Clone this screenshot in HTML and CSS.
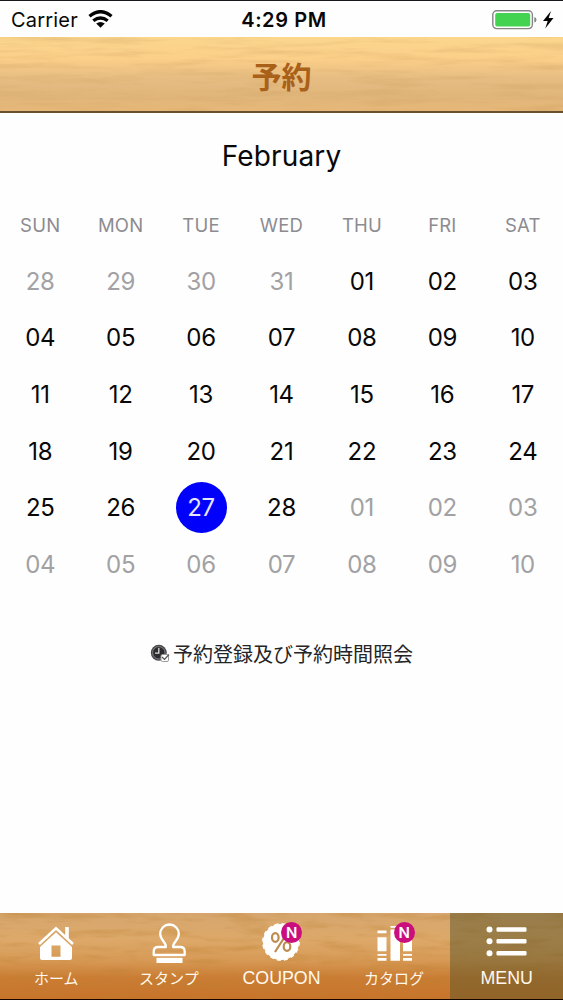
FILE: index.html
```html
<!DOCTYPE html>
<html lang="ja">
<head>
<meta charset="utf-8">
<title>予約</title>
<link rel="stylesheet" href="styles.css">
</head>
<body>
<div class="screen">
  <div class="status">
    <div class="carrier"><span>Carrier</span>
      <svg width="25" height="18" viewBox="0 0 25 18" fill="none" stroke="#050505" stroke-width="3.4"><path d="M1.5 6.2Q12.5-2.8 23.5 6.2M5.3 10.8Q12.5 5 19.7 10.8"/><path d="M12.500 17.800L8.200 13.500Q12.500 10.300 16.800 13.500Z" fill="#050505" stroke="none"/></svg>
    </div>
    <div class="time">4:29 PM</div>
    <div class="power">
      <svg width="63" height="20" viewBox="0 0 63 20"><rect x=".8" y=".8" width="39.600" height="17.800" rx="4" fill="#fff" stroke="#858585" stroke-width="1.400"/><rect x="3.200" y="3" width="35" height="13.400" rx="2" fill="#43d351"/><path d="M42.300 7q2.200.4 2.200 2.800t-2.200 2.800z" fill="#858585"/><path d="M59 1L51 11h4.700L53.200 18.600 61.500 8h-4.800z" fill="#050505"/></svg>
    </div>
  </div>
  <header class="header">
    <svg class="grain" width="563" height="74"><filter id="g1" x="0" y="0" width="100%" height="100%"><feTurbulence type="fractalNoise" baseFrequency=".014 .15" numOctaves="4" seed="8"/><feColorMatrix values="0 0 0 0 .6  0 0 0 0 .35  0 0 0 0 .12  1.600 0 0 0 -.72"/></filter><rect width="563" height="74" filter="url(#g1)"/></svg>
    <h1 class="title">予約</h1>
  </header>
  <main class="main">
    <h2 class="month">February</h2>
    <div class="weekdays"><span>SUN</span><span>MON</span><span>TUE</span><span>WED</span><span>THU</span><span>FRI</span><span>SAT</span></div>
    <div class="days">
      <span class="out">28</span><span class="out">29</span><span class="out">30</span><span class="out">31</span><span>01</span><span>02</span><span>03</span>
      <span>04</span><span>05</span><span>06</span><span>07</span><span>08</span><span>09</span><span>10</span>
      <span>11</span><span>12</span><span>13</span><span>14</span><span>15</span><span>16</span><span>17</span>
      <span>18</span><span>19</span><span>20</span><span>21</span><span>22</span><span>23</span><span>24</span>
      <span>25</span><span>26</span><span><b class="selected">27</b></span><span>28</span><span class="out">01</span><span class="out">02</span><span class="out">03</span>
      <span class="out">04</span><span class="out">05</span><span class="out">06</span><span class="out">07</span><span class="out">08</span><span class="out">09</span><span class="out">10</span>
    </div>
    <div class="action">
      <svg width="20" height="19" viewBox="0 0 20 19"><circle cx="8.800" cy="8.800" r="8" fill="#48484c"/><circle cx="8.800" cy="8.800" r="6.200" fill="#2c2c30" stroke="#929295" stroke-width=".8"/><path d="M8.800 4v5.200H5" fill="none" stroke="#ddd" stroke-width="1.300"/><rect x="11" y="10.500" width="7.500" height="7" rx="1.500" fill="#fff" stroke="#9a9a9d"/><path d="M12 13l2.500 2.500L19 10.500" fill="none" stroke="#555" stroke-width="1.200"/></svg>
      <span>予約登録及び予約時間照会</span>
    </div>
  </main>
  <nav class="tabs">
    <svg class="grain" width="563" height="86"><filter id="g2" x="0" y="0" width="100%" height="100%"><feTurbulence type="fractalNoise" baseFrequency=".022 .12" numOctaves="4" seed="5"/><feColorMatrix values="0 0 0 0 .5  0 0 0 0 .22  0 0 0 0 .03  1.900 0 0 0 -.9"/></filter><rect width="563" height="86" filter="url(#g2)"/></svg>
    <div class="tab">
      <svg width="40" height="42" viewBox="0 0 40 42"><path d="M3 23L20 7.200 37 23" fill="none" stroke="#fff" stroke-width="2.600"/><path d="M29.200 6h3.600v13l-3.600-3.400z" fill="#fff"/><path fill="#fff" fill-rule="evenodd" d="M20 11.300L36 26v11q0 2-2 2H6q-2 0-2-2V26zM15.500 24.500v11.200h9V24.500z"/></svg>
      <span class="jp">ホーム</span>
    </div>
    <div class="tab">
      <svg width="40" height="46" viewBox="0 0 40 46"><path d="M16.800 26c1-4.500-5.600-6.500-5.600-13.200a9.300 9.300 0 0 1 18.600 0c0 6.700-6.600 8.700-5.600 13.200h7c3.200 0 4.500 2 4.500 4.500V34h-31v-3.500c0-2.500 1.300-4.500 4.500-4.500z" fill="none" stroke="#fff" stroke-width="2.300" stroke-linejoin="round"/><path d="M7.500 36.800h26V42h-26z" fill="#fff"/></svg>
      <span class="jp">スタンプ</span>
    </div>
    <div class="tab">
      <svg width="44" height="42" viewBox="0 0 44 42"><circle cx="22" cy="21" r="18" fill="#fff"/><circle cx="22" cy="21" r="18.200" fill="none" stroke="#fff" stroke-width="1.400" stroke-dasharray="4 3.150"/><g fill="none" stroke="#bd8a4f" stroke-width="2.200"><ellipse cx="16.300" cy="16.500" rx="3.300" ry="4.300"/><ellipse cx="28" cy="25.500" rx="3.300" ry="4.300"/><path d="M28.500 11.500L16 31"/></g></svg>
      <b class="badge">N</b>
      <span class="en">COUPON</span>
    </div>
    <div class="tab">
      <svg width="40" height="42" viewBox="0 0 40 42" fill="#fff"><path d="M3.500 9.500h9v2.800h-9zM3.500 16.200h9v14h-9zM3.500 33h9v1.800h-9zM3.500 37h9v2.700h-9zM16.500 5h9.500v1.800h-9.500zM16.500 8.600h9.500v31.100h-9.500zM29 16h9v14.200h-9zM29 33h9v1.800h-9zM29 37h9v2.700h-9z"/></svg>
      <b class="badge">N</b>
      <span class="jp">カタログ</span>
    </div>
    <div class="tab active">
      <svg width="42" height="42" viewBox="1 0 42 42" fill="#fff"><circle cx="4.500" cy="8.500" r="3"/><circle cx="4.500" cy="20.300" r="3"/><circle cx="4.500" cy="32.200" r="3"/><rect x="11.500" y="6.300" width="30" height="4.400" rx="1.200"/><rect x="11.500" y="18.100" width="30" height="4.400" rx="1.200"/><rect x="11.500" y="30" width="30" height="4.400" rx="1.200"/></svg>
      <span class="en">MENU</span>
    </div>
  </nav>
</div>
</body>
</html>
```
FILE: styles.css
```css
* { box-sizing: border-box; }
body { margin: 0; background: #fefefe; font-family: Inter, "Noto Sans CJK JP", sans-serif; color: #080808; }
.screen { width: 563px; height: 1000px; display: flex; flex-direction: column; overflow: hidden; border-top: 1px solid #19171b; border-bottom: 1px solid #160400; }
.status { height: 36px; flex: none; display: grid; grid-template-columns: 1fr auto 1fr; align-items: center; padding: 1px 8px 0 11px; background: #fefefe; }
.carrier { display: flex; align-items: center; gap: 10px; font-size: 20px; letter-spacing: .2px; }
.carrier svg { margin-bottom: 2px; }
.time { font-size: 20px; font-weight: 600; letter-spacing: .6px; margin-left: 2px; }
.power { display: flex; justify-content: flex-end; }
.header { height: 76px; flex: none; position: relative; display: flex; align-items: center; justify-content: center; background: linear-gradient(#fcd68d, #fbcf88 30%, #e7bd83 55%, #e1b67b 80%, #e6b778); border-bottom: 2px solid #68502f; }
.grain { position: absolute; top: 0; left: 0; opacity: .5; }
.title { position: relative; margin: 2px 0 0; font: 700 30px/40px "Noto Sans CJK JP", sans-serif; color: #a96018; }
.main { flex: 1; display: flex; flex-direction: column; align-items: center; padding-top: 23px; }
.month { margin: 0; font-size: 28px; line-height: 40px; font-weight: 400; letter-spacing: .15px; }
.weekdays, .days { width: 563px; display: grid; grid-template-columns: repeat(7, 1fr); justify-items: center; align-items: center; }
.weekdays { margin-top: 29px; height: 40px; font-size: 18.500px; letter-spacing: .2px; color: #8c8b90; }
.days { margin-top: 8px; grid-auto-rows: 56.600px; font-size: 24px; letter-spacing: -.3px; }
.out { color: #a2a1a4; }
.selected { width: 51px; height: 51px; border-radius: 50%; background: #0000fb; color: #e5e5ff; font-weight: 400; display: flex; align-items: center; justify-content: center; }
.action { margin-top: 45px; height: 32px; display: flex; align-items: center; gap: 3px; font: 400 20px/32px "Noto Sans CJK JP", sans-serif; color: #242426; }
.tabs { height: 86px; flex: none; position: relative; display: grid; grid-template-columns: repeat(5, 1fr); background: linear-gradient(#d6a66e, #dda96a 30%, #d79a56 55%, #ca7d34 75%, #c8742b); }
.tab { position: relative; display: flex; flex-direction: column; align-items: center; justify-content: space-between; padding: 8px 0 9px; color: #fff8ec; }
.tab svg { flex: none; margin-bottom: -10px; }
.tab span { line-height: 24px; white-space: nowrap; }
.tab .jp { font: 400 15px/24px "Noto Sans CJK JP", sans-serif; }
.tab .en { font: 400 17.800px/24px "Liberation Sans", sans-serif; }
.active { background: rgba(92, 83, 40, .5); }
.badge { position: absolute; left: 56px; top: 9px; width: 21px; height: 21px; border-radius: 50%; background: #ca0e7e; color: #fff; font-size: 15px; line-height: 21px; font-weight: 600; text-align: center; }
```
